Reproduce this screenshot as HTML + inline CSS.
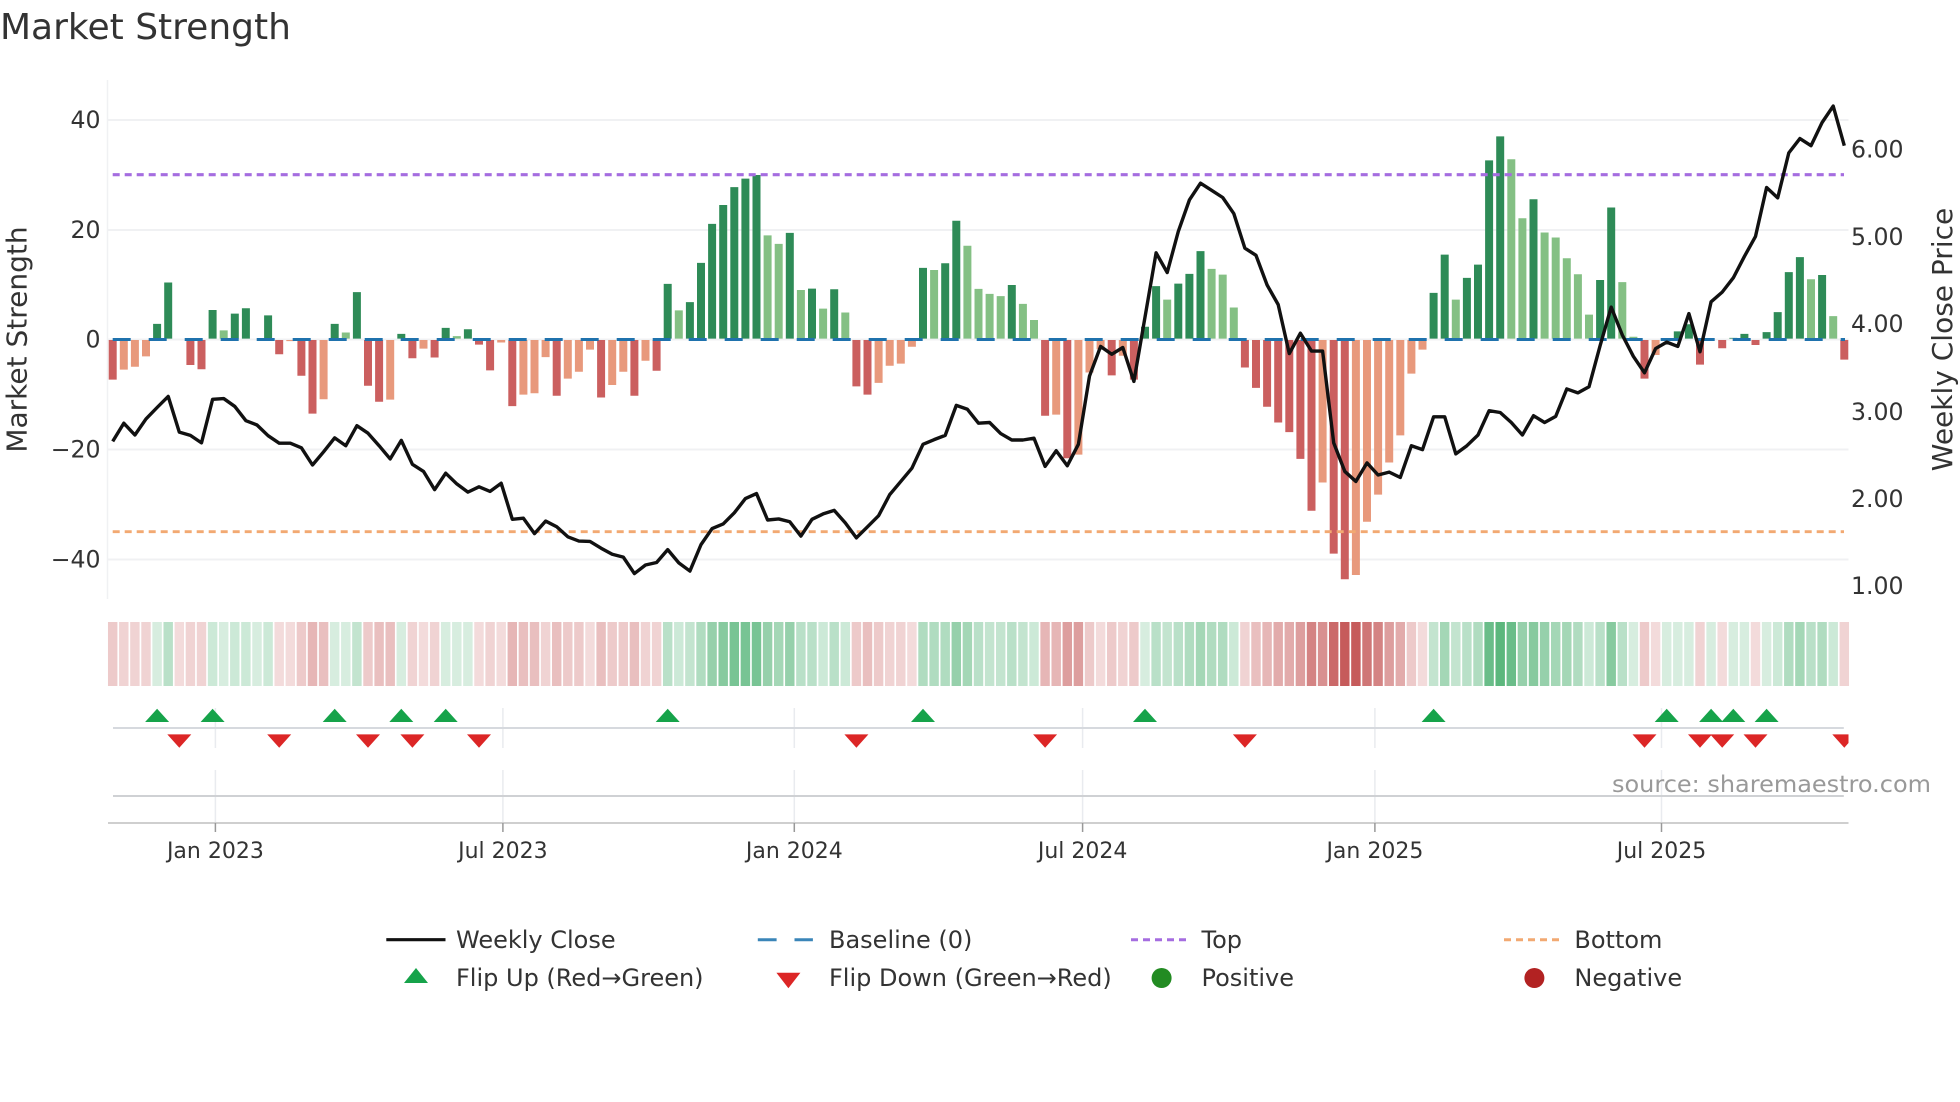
<!DOCTYPE html>
<html>
<head>
<meta charset="utf-8">
<title>Market Strength</title>
<style>
html,body{margin:0;padding:0;background:#fff;}
svg{display:block;}
text{font-family:"DejaVu Sans","Liberation Sans",sans-serif;fill:#333;}
</style>
</head>
<body>
<svg width="1960" height="1102" viewBox="0 0 1960 1102" xmlns="http://www.w3.org/2000/svg">
<defs><clipPath id="c"><rect x="100" y="700" width="1748.5" height="60"/></clipPath></defs>

<text x="0" y="39" font-size="36">Market Strength</text>

<!-- grid -->
<path d="M107.5 80V599" stroke="#f0f1f3" stroke-width="1.5" fill="none"/>
<path d="M107.5 120H1848.5M107.5 230H1848.5M107.5 339.5H1848.5M107.5 449.5H1848.5M107.5 559.5H1848.5" stroke="#f0f1f3" stroke-width="2" fill="none"/>

<!-- bars -->
<g transform="translate(112.7 60) scale(11.1 .35714)" fill="none" stroke-width=".72">
<path stroke="#2e8b57" d="M4 780V739M5 780V623M9 780V700M11 780V710M12 780V695M14 780V715M20 780V739M22 780V650M26 780V767M30 780V750M32 780V754M50 780V627M52 780V678M53 780V568M54 780V459M55 780V406M56 780V356M57 780V332M58 780V322M61 780V484M63 780V640M65 780V642M73 780V582M75 780V569M76 780V450M81 780V630M93 780V747M94 780V633M96 780V626M97 780V599M98 780V535M119 780V652M120 780V545M122 780V610M123 780V573M124 780V281M125 780V214M128 780V390M134 780V616M135 780V413M141 780V760M142 780V740M146 780V778M147 780V767M149 780V762M150 780V706M151 780V594M152 780V552M154 780V602"/>
<path stroke="#84c084" d="M10 780V757M21 780V763M31 780V773M51 780V701M59 780V491M60 780V515M62 780V644M64 780V696M66 780V707M74 780V588M77 780V520M78 780V641M79 780V655M80 780V661M82 780V683M83 780V728M95 780V671M99 780V585M100 780V601M101 780V693M121 780V671M126 780V278M127 780V443M129 780V483M130 780V497M131 780V555M132 780V600M133 780V713M136 780V622M137 780V775M153 780V614M155 780V717"/>
<path stroke="#cb5f5f" d="M0 784V895M7 784V854M8 784V866M15 784V824M17 784V884M18 784V990M23 784V912M24 784V957M27 784V835M29 784V833M33 784V797M34 784V869M36 784V969M40 784V940M44 784V945M47 784V940M49 784V870M67 784V914M68 784V937M84 784V996M86 784V1115M90 784V883M92 784V895M102 784V861M103 784V918M104 784V971M105 784V1015M106 784V1042M107 784V1117M108 784V1262M110 784V1382M111 784V1454M138 784V892M143 784V853M145 784V807M148 784V798M156 784V839"/>
<path stroke="#e8997c" d="M1 784V867M2 784V859M3 784V830M16 784V787M19 784V950M25 784V951M28 784V808M35 784V791M37 784V937M38 784V933M39 784V832M41 784V892M42 784V873M43 784V811M45 784V910M46 784V873M48 784V842M69 784V904M70 784V856M71 784V850M72 784V803M85 784V993M87 784V1105M88 784V875M89 784V810M91 784V828M109 784V1183M112 784V1442M113 784V1293M114 784V1217M115 784V1127M116 784V1051M117 784V878M118 784V811M139 784V826"/>
</g>

<!-- baseline, top, bottom -->
<path d="M112.7 339.5H1845" stroke="#1f72ad" stroke-width="3" stroke-dasharray="18 18" fill="none"/>
<path d="M112.7 174.7H1844" stroke="#a56de0" stroke-width="3.2" stroke-dasharray="7 5" fill="none"/>
<path d="M112.7 531.7H1844" stroke="#f2a972" stroke-width="2.8" stroke-dasharray="7 5" fill="none"/>

<!-- close line -->
<g transform="translate(112.7 60) scale(11.1 .35714)">
<polyline fill="none" stroke="#111" stroke-width="3.4" stroke-linejoin="round" vector-effect="non-scaling-stroke" points="0,1068 1,1017 2,1050 3,1005 4,973 5,942 6,1042 7,1051 8,1072 9,950 10,948 11,970 12,1010 13,1022 14,1052 15,1073 16,1073 17,1086 18,1134 19,1097 20,1058 21,1080 22,1024 23,1045 24,1080 25,1117 26,1065 27,1132 28,1152 29,1203 30,1157 31,1187 32,1210 33,1195 34,1208 35,1185 36,1286 37,1283 38,1326 39,1291 40,1307 41,1335 42,1347 43,1348 44,1367 45,1384 46,1392 47,1438 48,1414 49,1407 50,1371 51,1408 52,1431 53,1357 54,1312 55,1299 56,1268 57,1228 58,1214 59,1288 60,1285 61,1293 62,1333 63,1286 64,1271 65,1261 66,1296 67,1338 68,1307 69,1276 70,1217 71,1180 72,1143 73,1076 74,1063 75,1051 76,967 77,978 78,1017 79,1015 80,1046 81,1064 82,1064 83,1059 84,1138 85,1094 86,1136 87,1076 88,885 89,802 90,824 91,805 92,900 93,720 94,540 95,595 96,480 97,392 98,345 99,365 100,385 101,430 102,527 103,547 104,630 105,685 106,822 107,765 108,815 109,815 110,1072 111,1152 112,1180 113,1128 114,1162 115,1154 116,1169 117,1080 118,1091 119,999 120,999 121,1103 122,1080 123,1050 124,982 125,987 126,1015 127,1050 128,996 129,1015 130,998 131,921 132,932 133,915 134,800 135,692 136,770 137,830 138,876 139,808 140,790 141,802 142,710 143,817 144,677 145,650 146,610 147,550 148,494 149,357 150,386 151,260 152,220 153,240 154,175 155,129 156,240"/>
</g>

<!-- heat strip -->
<g transform="translate(112.7 622) scale(11.1 64)" fill="none" stroke-width=".85">
<g stroke="#0f9540">
<path stroke-opacity=".17" d="M4 0V1M10 0V1M13 0V1M20 0V1M21 0V1M26 0V1M30 0V1M31 0V1M32 0V1M93 0V1M137 0V1M140 0V1M141 0V1M142 0V1M144 0V1M146 0V1M147 0V1M149 0V1"/>
<path stroke-opacity=".21" d="M9 0V1M11 0V1M12 0V1M14 0V1M51 0V1M64 0V1M66 0V1M83 0V1M101 0V1M133 0V1M150 0V1M155 0V1"/>
<path stroke-opacity=".25" d="M22 0V1M52 0V1M82 0V1M95 0V1M119 0V1M121 0V1M80 0V1M79 0V1"/>
<path stroke-opacity=".29" d="M5 0V1M50 0V1M62 0V1M63 0V1M65 0V1M78 0V1M81 0V1M94 0V1M96 0V1M122 0V1M134 0V1M136 0V1M153 0V1"/>
<path stroke-opacity=".33" d="M53 0V1M73 0V1M74 0V1M75 0V1M97 0V1M99 0V1M100 0V1M123 0V1M132 0V1M151 0V1M154 0V1"/>
<path stroke-opacity=".38" d="M60 0V1M98 0V1M77 0V1M120 0V1M130 0V1M131 0V1M152 0V1"/>
<path stroke-opacity=".44" d="M54 0V1M59 0V1M61 0V1M76 0V1M127 0V1M129 0V1"/>
<path stroke-opacity=".50" d="M55 0V1M128 0V1M135 0V1"/>
<path stroke-opacity=".56" d="M56 0V1M57 0V1M58 0V1"/>
<path stroke-opacity=".62" d="M124 0V1M126 0V1"/>
<path stroke-opacity=".68" d="M125 0V1"/>
</g>
<g stroke="#b22222">
<path stroke-opacity=".16" d="M6 0V1M15 0V1M16 0V1M28 0V1M33 0V1M35 0V1M43 0V1M72 0V1M89 0V1M118 0V1M139 0V1M145 0V1M148 0V1"/>
<path stroke-opacity=".2" d="M1 0V1M2 0V1M3 0V1M7 0V1M8 0V1M27 0V1M29 0V1M34 0V1M39 0V1M48 0V1M49 0V1M70 0V1M71 0V1M91 0V1M102 0V1M143 0V1M156 0V1"/>
<path stroke-opacity=".24" d="M0 0V1M17 0V1M23 0V1M41 0V1M42 0V1M45 0V1M46 0V1M67 0V1M69 0V1M88 0V1M90 0V1M92 0V1M117 0V1M138 0V1"/>
<path stroke-opacity=".29" d="M19 0V1M24 0V1M25 0V1M37 0V1M38 0V1M40 0V1M44 0V1M47 0V1M68 0V1M103 0V1"/>
<path stroke-opacity=".33" d="M18 0V1M36 0V1M84 0V1M85 0V1M104 0V1"/>
<path stroke-opacity=".38" d="M105 0V1M106 0V1M116 0V1"/>
<path stroke-opacity=".44" d="M86 0V1M87 0V1M107 0V1M115 0V1"/>
<path stroke-opacity=".50" d="M109 0V1"/>
<path stroke-opacity=".56" d="M108 0V1M114 0V1"/>
<path stroke-opacity=".62" d="M113 0V1"/>
<path stroke-opacity=".68" d="M110 0V1"/>
<path stroke-opacity=".74" d="M111 0V1M112 0V1"/>
</g>
</g>

<!-- flip panel -->
<path d="M215.4 708V748M502.9 708V748M794.3 708V748M1082.6 708V748M1374.9 708V748M1661.5 708V748M215.4 770V823M502.9 770V823M794.3 770V823M1082.6 770V823M1374.9 770V823M1661.5 770V823" stroke="#e9ebef" stroke-width="1.5" fill="none"/>
<path d="M113 728H1843.8" stroke="#d6d9de" stroke-width="2" fill="none"/>
<path d="M113 796H1843.8" stroke="#cfd1d4" stroke-width="2" fill="none"/>
<path d="M108 823H1848.5" stroke="#cfcfcf" stroke-width="2" fill="none"/>
<path d="M215.4 823V832M502.9 823V832M794.3 823V832M1082.6 823V832M1374.9 823V832M1661.5 823V832" stroke="#999" stroke-width="1.5" fill="none"/>

<path fill="#16a34a" d="M145.1 722l12-13.3 12 13.3zM200.6 722l12-13.3 12 13.3zM322.7 722l12-13.3 12 13.3zM389.3 722l12-13.3 12 13.3zM433.7 722l12-13.3 12 13.3zM655.7 722l12-13.3 12 13.3zM911 722l12-13.3 12 13.3zM1133 722l12-13.3 12 13.3zM1421.6 722l12-13.3 12 13.3zM1654.7 722l12-13.3 12 13.3zM1699.1 722l12-13.3 12 13.3zM1721.3 722l12-13.3 12 13.3zM1754.6 722l12-13.3 12 13.3z"/>
<path fill="#dc2626" clip-path="url(#c)" d="M167.3 734.4l12 13.3 12-13.3zM267.2 734.4l12 13.3 12-13.3zM356 734.4l12 13.3 12-13.3zM400.4 734.4l12 13.3 12-13.3zM467 734.4l12 13.3 12-13.3zM844.4 734.4l12 13.3 12-13.3zM1033.1 734.4l12 13.3 12-13.3zM1232.9 734.4l12 13.3 12-13.3zM1632.5 734.4l12 13.3 12-13.3zM1688 734.4l12 13.3 12-13.3zM1710.2 734.4l12 13.3 12-13.3zM1743.5 734.4l12 13.3 12-13.3zM1832.3 734.4l12 13.3 12-13.3z"/>

<text x="1612" y="792" font-size="23.2" textLength="319" lengthAdjust="spacingAndGlyphs" style="fill:#999">source: sharemaestro.com</text>

<!-- y ticks left -->
<g font-size="23.6" text-anchor="end">
<text x="100.5" y="127.8">40</text>
<text x="100.5" y="237.8">20</text>
<text x="100.5" y="347.3">0</text>
<text x="100.5" y="457.3">−20</text>
<text x="100.5" y="567.3">−40</text>
</g>
<!-- y ticks right -->
<g font-size="23.6">
<text x="1851" y="157.7">6.00</text>
<text x="1851" y="244.8">5.00</text>
<text x="1851" y="332">4.00</text>
<text x="1851" y="419.8">3.00</text>
<text x="1851" y="507">2.00</text>
<text x="1851" y="594">1.00</text>
</g>
<text transform="translate(26.7 339.5) rotate(-90)" font-size="28" text-anchor="middle">Market Strength</text>
<text transform="translate(1952 339.5) rotate(-90)" font-size="28" text-anchor="middle">Weekly Close Price</text>

<!-- x ticks -->
<g font-size="22" text-anchor="middle">
<text x="215.4" y="858">Jan 2023</text>
<text x="502.9" y="858">Jul 2023</text>
<text x="794.3" y="858">Jan 2024</text>
<text x="1082.6" y="858">Jul 2024</text>
<text x="1374.9" y="858">Jan 2025</text>
<text x="1661.5" y="858">Jul 2025</text>
</g>

<!-- legend -->
<path d="M386.3 939.7H445.5" stroke="#111" stroke-width="3.2" fill="none"/>
<path d="M757.8 939.7H776.6M794.5 939.7H812.9" stroke="#3a85b8" stroke-width="3" fill="none"/>
<path d="M1131 939.7H1186" stroke="#a56de0" stroke-width="3" stroke-dasharray="7 5" fill="none"/>
<path d="M1504 939.7H1559" stroke="#f2a972" stroke-width="3" stroke-dasharray="7 5" fill="none"/>
<path d="M404 983l12-15 12 15z" fill="#16a34a"/>
<path d="M776.4 972.7l12 15.6 12-15.6z" fill="#dc2626"/>
<circle cx="1161.6" cy="978" r="10" fill="#228b22"/>
<circle cx="1534.4" cy="978" r="10" fill="#b22222"/>
<g font-size="24">
<text x="456" y="948">Weekly Close</text>
<text x="829" y="948">Baseline (0)</text>
<text x="1201.5" y="948">Top</text>
<text x="1574.4" y="948">Bottom</text>
<text x="456" y="986">Flip Up (Red→Green)</text>
<text x="829" y="986">Flip Down (Green→Red)</text>
<text x="1201.5" y="986">Positive</text>
<text x="1574.4" y="986">Negative</text>
</g>
</svg>
</body>
</html>
